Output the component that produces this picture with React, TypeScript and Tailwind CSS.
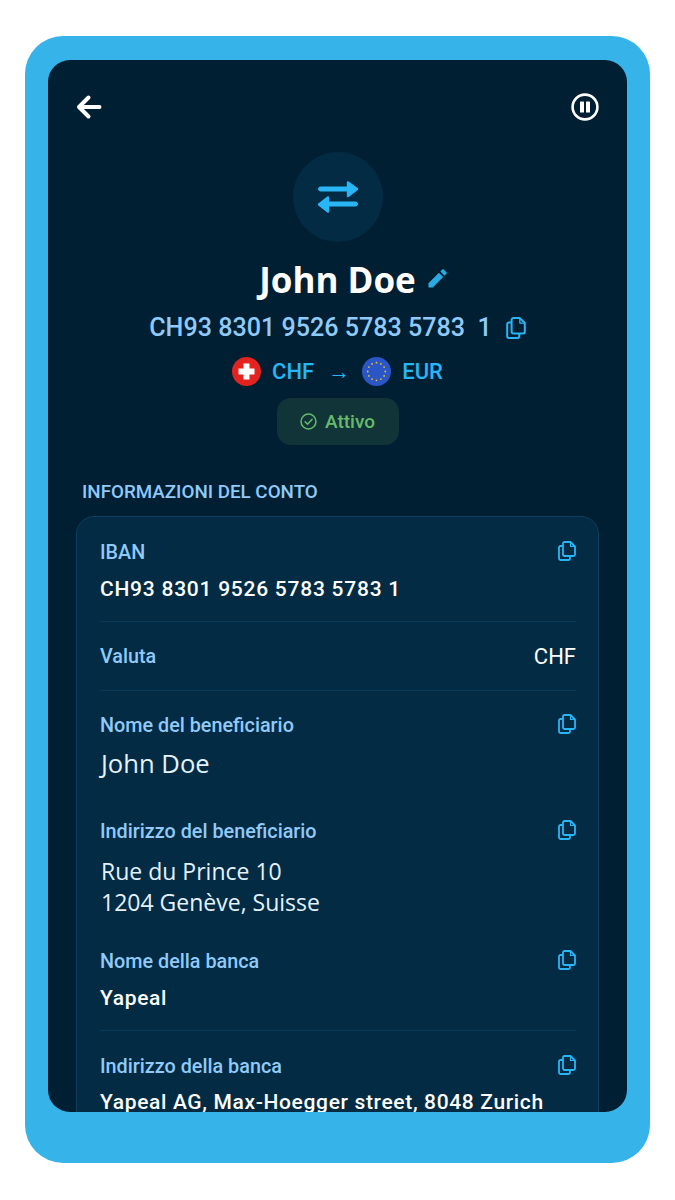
const roboto = "font-['Roboto',sans-serif]";
const openSans = "font-['Open_Sans',sans-serif]";

function CopyIcon({ className = '' }: { className?: string }) {
  return (
    <svg viewBox="0 0 18 20" fill="none" stroke="#29B6F6" strokeWidth="1.8" strokeLinejoin="round" className={className}>
      <path d="M6.5 1H12.5L17 5.5V13.5C17 14.3 16.3 15 15.5 15H6.5C5.7 15 5 14.3 5 13.5V2.5C5 1.7 5.7 1 6.5 1Z" />
      <path d="M12.5 1V5.5H17" strokeWidth="1.2" />
      <path d="M5 5H2.5C1.7 5 1 5.7 1 6.5V17.5C1 18.3 1.7 19 2.5 19H10.5C11.3 19 12 18.3 12 17.5V15" />
    </svg>
  );
}

function SwissFlag() {
  return (
    <svg viewBox="0 0 29 29" className="w-[29px] h-[29px]">
      <circle cx="14.5" cy="14.5" r="14.5" fill="#E2231F" />
      <path d="M11.5 6.5H17.5V11.5H22.5V17.5H17.5V22.5H11.5V17.5H6.5V11.5H11.5Z" fill="#fff" />
    </svg>
  );
}

function EuFlag() {
  const stars = Array.from({ length: 12 }, (_, i) => {
    const a = (i * Math.PI) / 6;
    return { x: 14.5 + Math.sin(a) * 8.8, y: 14.5 - Math.cos(a) * 8.8 };
  });
  return (
    <svg viewBox="0 0 29 29" className="w-[29px] h-[29px]">
      <circle cx="14.5" cy="14.5" r="14.5" fill="#2A56C6" />
      {stars.map((s, i) => (
        <circle key={i} cx={s.x} cy={s.y} r="0.9" fill="#E3C33B" />
      ))}
    </svg>
  );
}

function Row({
  label,
  children,
  className = '',
  divider = false,
}: {
  label: string;
  children: React.ReactNode;
  className?: string;
  divider?: boolean;
}) {
  return (
    <div className={`${className} ${divider ? 'border-b border-[#0A3A58]' : ''}`}>
      <div className="flex items-center justify-between h-[20px]">
        <span className="text-[19.8px] font-medium leading-[22px] pt-[2px] text-[#90CAF9]">{label}</span>
        <CopyIcon className="w-[18px] h-[20px] mb-[2px]" />
      </div>
      {children}
    </div>
  );
}

export default function App() {
  return (
    <div className={`w-[675px] h-[1200px] bg-white pt-[36px] pl-[25px] ${roboto}`}>
      <div className="w-[625px] h-[1127px] rounded-[38px] bg-[#36B3E8] pt-[24px] px-[23px]">
        <div className="h-[1052px] rounded-[22px] bg-[#001F33] overflow-hidden px-[28px]">
          <div className="flex items-center justify-between h-[28px] mt-[33px]">
            <svg viewBox="0 0 26 26" fill="none" stroke="#fff" strokeWidth="4" strokeLinecap="round" strokeLinejoin="round" className="w-[26px] h-[26px]">
              <path d="M23.5 13H3M12.5 3.5L3 13L12.5 22.5" />
            </svg>
            <svg viewBox="0 0 28 28" className="w-[28px] h-[28px]">
              <circle cx="14" cy="14" r="12.4" fill="none" stroke="#fff" strokeWidth="2.6" />
              <rect x="9" y="8.5" width="4" height="11" rx="0.6" fill="#fff" />
              <rect x="15" y="8.5" width="4" height="11" rx="0.6" fill="#fff" />
            </svg>
          </div>

          <div className="flex flex-col items-center">
            <div className="mt-[31px] w-[90px] h-[90px] rounded-full bg-[#032B43] flex items-center justify-center">
              <svg viewBox="0 0 40 32" className="w-[40px] h-[32px]" fill="#29B6F6" stroke="#29B6F6" strokeLinejoin="round">
                <rect x="0.5" y="6" width="31" height="4" rx="2" />
                <path d="M30 1.5L39 8L30 15Z" strokeWidth="2.4" />
                <rect x="8.5" y="21" width="31" height="4" rx="2" />
                <path d="M10 16.5L1 23.5L10 30.5Z" strokeWidth="2.4" />
              </svg>
            </div>

            <div className="mt-[14px] h-[48px] flex items-center gap-[12px] pl-[31px]">
              <span className={`${openSans} text-[35px] font-bold leading-[48px] text-white`}>John Doe</span>
              <svg viewBox="0 0 20 20" fill="#29ABE2" className="w-[19px] h-[19px] mb-[4px]">
                <path d="M0.5 15L11.5 4L16 8.5L5 19.5H0.5Z" />
                <path d="M13 2.5L14.8 0.7C15.4 0.1 16.2 0.1 16.8 0.7L19.3 3.2C19.9 3.8 19.9 4.6 19.3 5.2L17.5 7Z" />
              </svg>
            </div>

            <div className="mt-[10px] h-[28px] flex items-center gap-[14px]">
              <span className="text-[25.1px] font-medium leading-[28px] text-[#90CAF9] whitespace-pre">CH93 8301 9526 5783 5783  1</span>
              <CopyIcon className="w-[20px] h-[22px]" />
            </div>

            <div className="mt-[15px] h-[29px] flex items-center text-[22px] font-medium leading-[29px] text-[#29B6F6]">
              <SwissFlag />
              <span className="ml-[11px]">CHF</span>
              <span className="ml-[14px] text-[22px] font-normal">→</span>
              <span className="ml-[12px]"><EuFlag /></span>
              <span className="ml-[11px]">EUR</span>
            </div>

            <div className="mt-[12px] w-[122px] h-[47px] rounded-[14px] bg-[#113438] flex items-center justify-center gap-[8px] text-[#66BB6A]">
              <svg viewBox="0 0 18 18" fill="none" stroke="#66BB6A" strokeWidth="1.6" strokeLinecap="round" strokeLinejoin="round" className="w-[17px] h-[17px]">
                <circle cx="9" cy="9" r="7.9" />
                <path d="M5.4 9.3L8 11.8L12.8 6.6" />
              </svg>
              <span className="text-[19px] font-medium leading-[24px]">Attivo</span>
            </div>
          </div>

          <div className="mt-[35px] ml-[6px] text-[18.8px] font-medium leading-[24px] text-[#90CAF9]">INFORMAZIONI DEL CONTO</div>

          <div className="mt-[12px] w-[523px] rounded-[18px] border border-[#0D3F5E] bg-[#032B43] pl-[23px] pr-[22px] pt-[25px] pb-[40px]">
            <Row label="IBAN" divider className="h-[80px]">
              <div className="mt-[15px] text-[21px] font-medium leading-[24px] tracking-[0.75px] text-white">CH93 8301 9526 5783 5783 1</div>
            </Row>

            <div className="h-[69px] flex items-center justify-between border-b border-[#0A3A58]">
              <span className="text-[19.8px] font-medium pt-[1px] text-[#90CAF9]">Valuta</span>
              <span className="text-[22px] font-normal pt-[1px] text-white">CHF</span>
            </div>

            <Row label="Nome del beneficiario" className="pt-[24px] h-[130px]">
              <div className={`${openSans} mt-[13px] pl-[1px] text-[25.6px] leading-[32px] text-[#E3F2FD]`}>John Doe</div>
            </Row>

            <Row label="Indirizzo del beneficiario" className="h-[130px]">
              <div className={`${openSans} mt-[15px] pl-[1px] text-[23px] leading-[31px] text-[#E3F2FD]`}>
                Rue du Prince 10
                <br />
                1204 Genève, Suisse
              </div>
            </Row>

            <Row label="Nome della banca" divider className="h-[80px]">
              <div className="mt-[13px] text-[21px] font-medium leading-[28px] tracking-[0.65px] text-white">Yapeal</div>
            </Row>

            <Row label="Indirizzo della banca" className="mt-[25px]">
              <div className="mt-[12px] text-[21px] font-medium leading-[28px] tracking-[0.65px] text-white whitespace-nowrap">Yapeal AG, Max-Hoegger street, 8048 Zurich</div>
            </Row>
          </div>
        </div>
      </div>
    </div>
  );
}
